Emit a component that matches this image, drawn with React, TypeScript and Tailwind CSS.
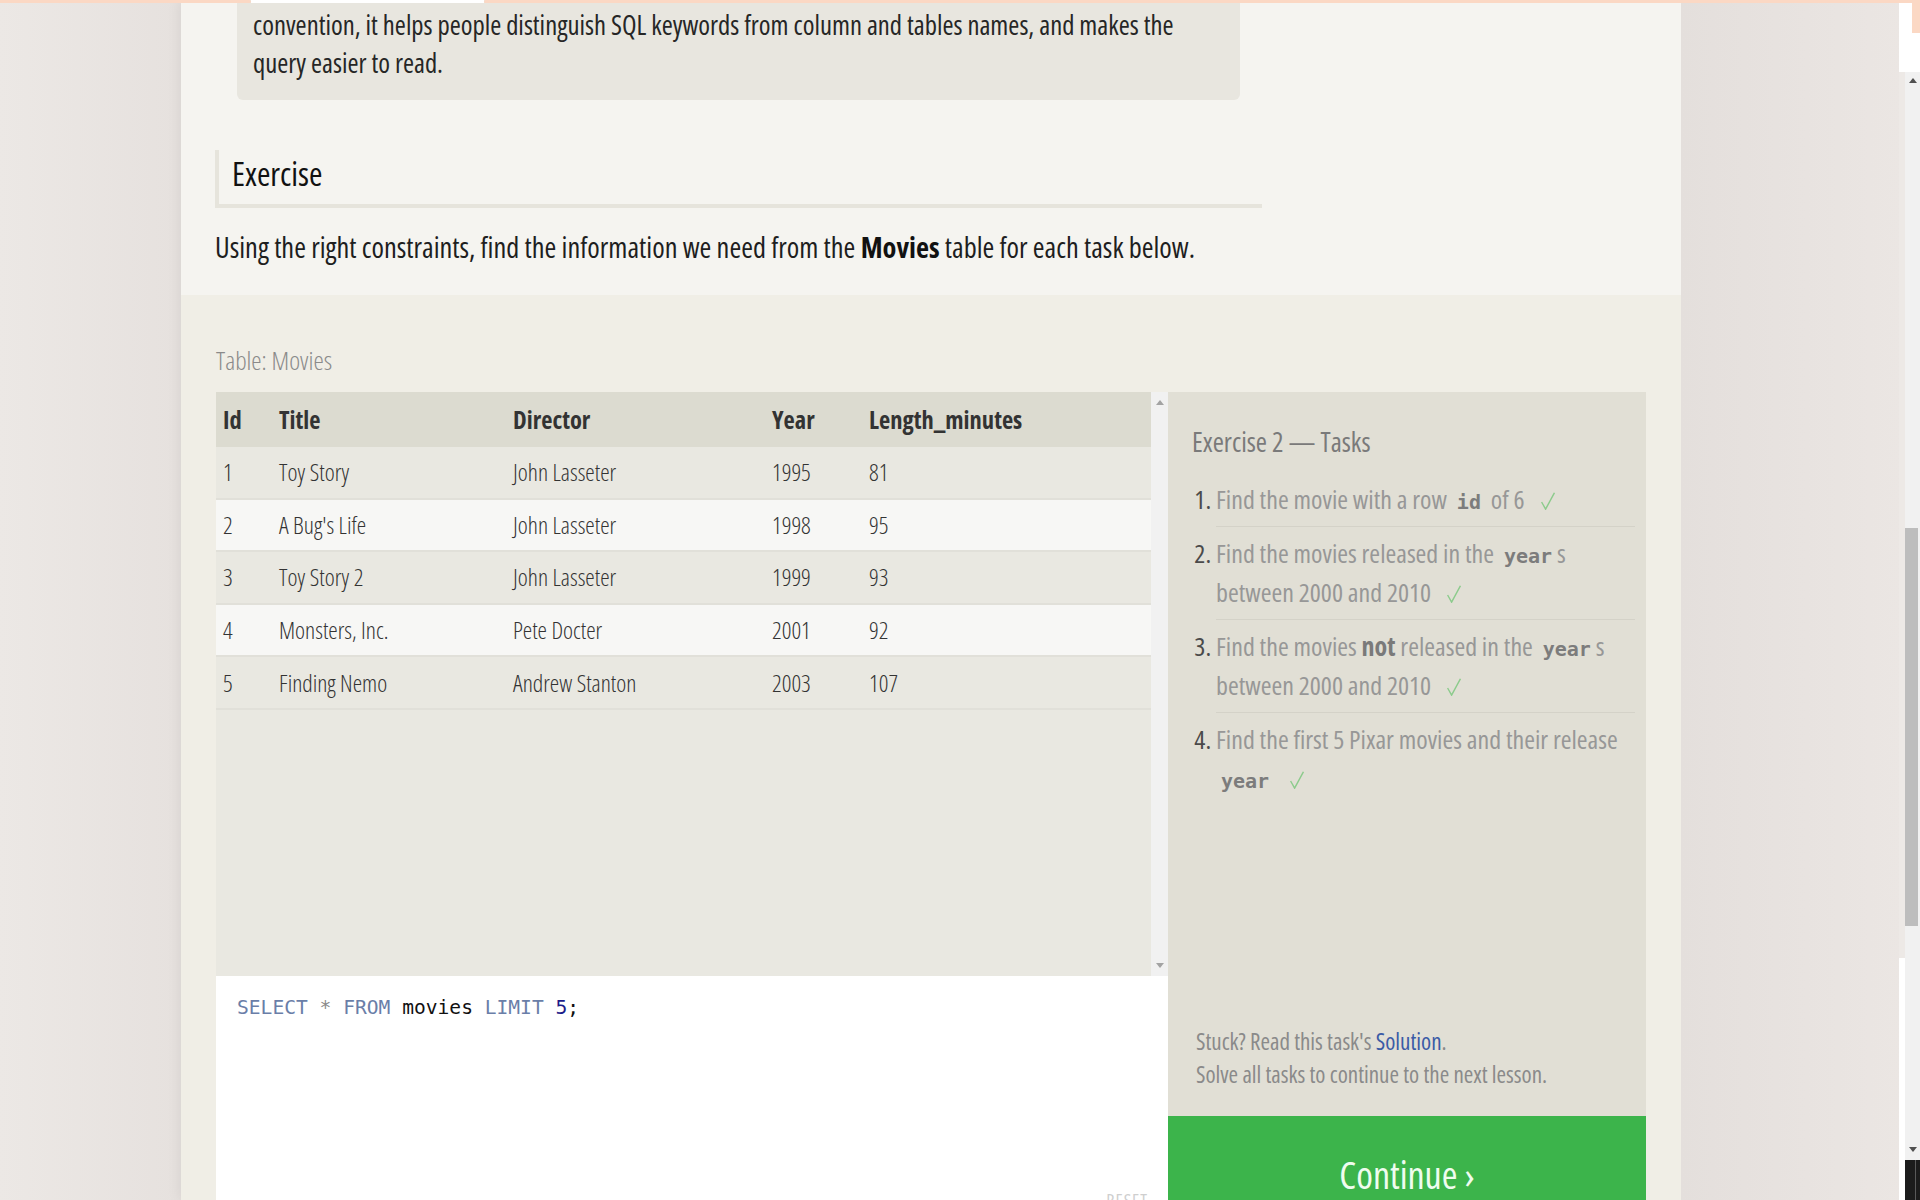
import React from 'react';

const MOVIES = [
  { id: 1, title: 'Toy Story', director: 'John Lasseter', year: 1995, length: 81 },
  { id: 2, title: "A Bug's Life", director: 'John Lasseter', year: 1998, length: 95 },
  { id: 3, title: 'Toy Story 2', director: 'John Lasseter', year: 1999, length: 93 },
  { id: 4, title: 'Monsters, Inc.', director: 'Pete Docter', year: 2001, length: 92 },
  { id: 5, title: 'Finding Nemo', director: 'Andrew Stanton', year: 2003, length: 107 },
];

const COLS = 'grid grid-cols-[56px_234px_259px_97px_1fr] items-center pl-[7px]';

function Check() {
  return (
    <svg width="14" height="18" viewBox="0 0 14 18" fill="none" stroke="#8ccb8c" strokeWidth="1.4" className="ml-[16px] inline-block align-[-1px]">
      <polyline points="0.6,10 4.6,17.2 13.4,0.8" />
    </svg>
  );
}

function Code({ children }: { children: React.ReactNode }) {
  return (
    <code className="px-[5px] font-['DejaVu_Sans_Mono',monospace] text-[20px] font-bold leading-none text-[#7c7c7c] [font-stretch:100%]">
      {children}
    </code>
  );
}

function Arrow({ up }: { up?: boolean }) {
  return (
    <svg width="8" height="5" viewBox="0 0 8 5" className="block">
      <polygon points={up ? '0,5 4,0 8,5' : '0,0 8,0 4,5'} fill="#a3a3a3" />
    </svg>
  );
}

export default function App() {
  return (
    <div className="relative flex h-[1200px] w-[1920px] overflow-hidden bg-[#ebe6e3] font-['Open_Sans',sans-serif] text-[#222] [font-stretch:75%]">
      {/* left gutter */}
      <div className="w-[181px] shrink-0 bg-gradient-to-r from-[#ece8e5] to-[#e6e1de]" />

      {/* lesson column */}
      <main className="flex w-[1500px] shrink-0 flex-col shadow-[0_0_14px_rgba(0,0,0,0.08)]">
        <section className="h-[295px] shrink-0 bg-[#f5f4f0] pl-[34px]">
          <div className="ml-[22px] w-[1003px] whitespace-nowrap rounded-b-[6px] bg-[#e8e6df] pb-[18px] pl-[16px] pt-[6px] text-[26.7px] leading-[38px] text-[#262626]">
            convention, it helps people distinguish SQL keywords from column and tables names, and makes the
            <br />
            query easier to read.
          </div>
          <h2 className="mt-[50px] w-[1047px] border-b-[4px] border-l-[4px] border-[#e6e4dc] pb-[6px] pl-[13px] text-[32.5px] font-normal leading-[48px] text-[#111]">
            Exercise
          </h2>
          <p className="mt-[20px] whitespace-nowrap text-[28.4px] leading-[38px] text-[#1e1e1e]">
            Using the right constraints, find the information we need from the <strong className="font-bold text-[#111]">Movies</strong> table for each task below.
          </p>
        </section>

        <section className="flex-1 bg-[#f0eee6] pl-[35px] pt-[50px]">
          <div className="text-[26px] font-light leading-[30px] text-[#8a8a8a]">Table: Movies</div>

          <div className="mt-[17px] flex w-[1430px]">
            {/* table + editor */}
            <div className="flex w-[952px] flex-col">
              <div className="flex h-[584px] bg-[#e9e8e1]">
                <div className="flex-1 text-[#333]">
                  <div className={`${COLS} h-[55px] bg-[#dcdbd0] text-[24.5px] font-bold leading-[55px]`}>
                    <span>Id</span>
                    <span>Title</span>
                    <span>Director</span>
                    <span>Year</span>
                    <span>Length_minutes</span>
                  </div>
                  {MOVIES.map((m, i) => (
                    <div
                      key={m.id}
                      className={`${COLS} h-[52.6px] border-b-[2px] border-[#e1e0d9] text-[23.8px] font-light leading-[50px] ${
                        i % 2 === 1 ? 'bg-[#f7f7f5]' : 'bg-[#e9e8e1]'
                      }`}
                    >
                      <span>{m.id}</span>
                      <span>{m.title}</span>
                      <span>{m.director}</span>
                      <span>{m.year}</span>
                      <span>{m.length}</span>
                    </div>
                  ))}
                </div>
                <div className="flex w-[17px] flex-col items-center justify-between bg-[#f1f1f1] py-[8px]">
                  <Arrow up />
                  <Arrow />
                </div>
              </div>

              <div className="flex h-[240px] flex-col justify-between bg-white pb-[4px] pl-[21px] pr-[20px] pt-[18px]">
                <div className="font-['DejaVu_Sans_Mono',monospace] text-[19.6px] leading-[28px] [font-stretch:100%]">
                  <span className="text-[#6a7ea8]">SELECT</span> <span className="text-[#8a8a8a]">*</span>{' '}
                  <span className="text-[#6a7ea8]">FROM</span> <span className="text-[#111]">movies</span>{' '}
                  <span className="text-[#6a7ea8]">LIMIT</span> <span className="text-[#1c1c8a]">5</span>
                  <span className="text-[#111]">;</span>
                </div>
                <div className="self-end text-[18px] leading-[24px] tracking-[1px] text-[#cfcfcf]">RESET</div>
              </div>
            </div>

            {/* tasks panel */}
            <div className="flex w-[478px] flex-col">
              <div className="flex h-[724px] flex-col bg-[#e1dfd5]">
                <h3 className="pl-[24px] pt-[32px] text-[27px] font-normal leading-[36px] text-[#7a7a7a]">
                  Exercise 2 — Tasks
                </h3>
                <ol className="mt-[13px] list-outside list-decimal pl-[48px] pr-[11px] text-[26px] leading-[39px] text-[#979797] marker:text-[#4a4a4a]">
                  <li className="border-b border-[#d4d2c8] py-[7px] whitespace-nowrap">
                    Find the movie with a row <Code>id</Code> of 6<Check />
                  </li>
                  <li className="border-b border-[#d4d2c8] py-[7px] whitespace-nowrap">
                    Find the movies released in the <Code>year</Code>s
                    <br />
                    between 2000 and 2010<Check />
                  </li>
                  <li className="border-b border-[#d4d2c8] py-[7px] whitespace-nowrap">
                    Find the movies <strong className="font-bold text-[#7a7a7a]">not</strong> released in the <Code>year</Code>s
                    <br />
                    between 2000 and 2010<Check />
                  </li>
                  <li className="py-[7px] whitespace-nowrap">
                    Find the first 5 Pixar movies and their release
                    <br />
                    <Code>year</Code>
                    <Check />
                  </li>
                </ol>
                <div className="mt-auto pb-[25px] pl-[28px] text-[23px] leading-[33px] text-[#8a8a8a]">
                  <p>
                    Stuck? Read this task's <span className="text-[#3b5ba6]">Solution</span>.
                  </p>
                  <p>Solve all tasks to continue to the next lesson.</p>
                </div>
              </div>
              <div className="h-[120px] bg-[#3cb44b] pt-[34px] text-center text-[38px] leading-[48px] text-[#effcef]">
                Continue ›
              </div>
            </div>
          </div>
        </section>
      </main>

      {/* right gutter */}
      <div className="w-[218px] shrink-0 bg-gradient-to-r from-[#e4dfdc] to-[#ebe6e3]" />

      {/* browser edge + scrollbar */}
      <div className="flex w-[6px] shrink-0 flex-col">
        <div className="h-[72px] bg-white" />
        <div className="flex-1 bg-[#ede9e6]" />
        <div className="h-[242px] bg-white" />
      </div>
      <div className="flex w-[15px] shrink-0 flex-col">
        <div className="flex h-[72px] bg-white">
          <div className="w-[7px]" />
          <div className="h-[33px] flex-1 bg-[#fbd8c4]" />
        </div>
        <div className="flex flex-1 flex-col items-center bg-[#f1f1f1] pt-[6px]">
          <svg width="8" height="5" viewBox="0 0 8 5" className="block">
            <polygon points="0,5 4,0 8,5" fill="#505050" />
          </svg>
          <div className="mt-[445px] h-[398px] w-[13px] self-start bg-[#bdbdbd]" />
          <div className="flex-1" />
          <svg width="8" height="5" viewBox="0 0 8 5" className="mb-[8px] block">
            <polygon points="0,0 8,0 4,5" fill="#505050" />
          </svg>
        </div>
        <div className="flex h-[40px] bg-[#1c1c1c] pl-[10px]">
          <div className="w-px bg-[#5a5a5a]" />
        </div>
      </div>

      {/* thin tab strip over the top edge */}
      <div className="absolute left-0 top-0 flex h-[3px] w-[1912px]">
        <div className="w-[251px] rounded-r-[3px] bg-[#fbd8c4]" />
        <div className="w-[233px] bg-white" />
        <div className="flex-1 rounded-l-[3px] bg-[#fbd8c4]" />
      </div>
    </div>
  );
}
